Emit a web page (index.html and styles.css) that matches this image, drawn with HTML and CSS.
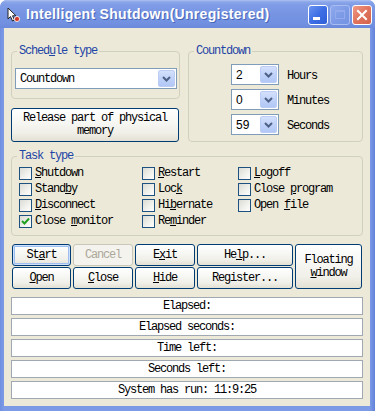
FILE: index.html
```html
<!DOCTYPE html>
<html>
<head>
<meta charset="utf-8">
<link rel="stylesheet" href="styles.css">
</head>
<body>
<div class="window">
  <div class="titlebar">
    <svg class="app-icon" width="16" height="16" viewBox="0 0 16 16">
      <path d="M3 1 L3 12 L5.5 9.5 L7.5 14 L9.5 13 L7.5 8.8 L11 8.8 Z" fill="#fff" stroke="#222" stroke-width="1"/>
      <circle cx="12" cy="12" r="2.6" fill="#d23a2a" stroke="#fff" stroke-width="0.8"/>
    </svg>
    <span class="title">Intelligent Shutdown(Unregistered)</span>
    <div class="tb-buttons">
      <span class="tb-btn tb-min"><span class="min-bar"></span></span>
      <span class="tb-btn tb-max"><span class="max-box"></span></span>
      <span class="tb-btn tb-close">
        <svg width="12" height="12" viewBox="0 0 12 12"><path d="M2 2 L10 10 M10 2 L2 10" stroke="#fff" stroke-width="2" stroke-linecap="square"/></svg>
      </span>
    </div>
  </div>
  <div class="body">
    <div class="top">
      <div class="left-col">
        <fieldset class="group sched">
          <legend>Sched<u>u</u>le type</legend>
          <div class="combo wide">
            <span class="combo-text">Countdown</span>
            <span class="combo-btn"><svg width="9" height="6" viewBox="0 0 9 6"><path d="M1 1 L4.5 4.5 L8 1" fill="none" stroke="#4d6185" stroke-width="2"/></svg></span>
          </div>
        </fieldset>
        <button class="btn release">Release part of physical<br>memory</button>
      </div>
      <fieldset class="group countdown">
        <legend>Countdown</legend>
        <div class="cd-rows">
          <div class="cd-row">
            <div class="combo small"><span class="combo-num">2</span><span class="combo-btn"><svg width="9" height="6" viewBox="0 0 9 6"><path d="M1 1 L4.5 4.5 L8 1" fill="none" stroke="#4d6185" stroke-width="2"/></svg></span></div>
            <span class="cd-label">Hours</span>
          </div>
          <div class="cd-row">
            <div class="combo small"><span class="combo-num">0</span><span class="combo-btn"><svg width="9" height="6" viewBox="0 0 9 6"><path d="M1 1 L4.5 4.5 L8 1" fill="none" stroke="#4d6185" stroke-width="2"/></svg></span></div>
            <span class="cd-label">Minutes</span>
          </div>
          <div class="cd-row">
            <div class="combo small"><span class="combo-num">59</span><span class="combo-btn"><svg width="9" height="6" viewBox="0 0 9 6"><path d="M1 1 L4.5 4.5 L8 1" fill="none" stroke="#4d6185" stroke-width="2"/></svg></span></div>
            <span class="cd-label">Seconds</span>
          </div>
        </div>
      </fieldset>
    </div>

    <fieldset class="group task">
      <legend>Task type</legend>
      <div class="task-grid">
        <label class="chk"><span class="box"></span><span><u>S</u>hutdown</span></label>
        <label class="chk"><span class="box"></span><span><u>R</u>estart</span></label>
        <label class="chk"><span class="box"></span><span><u>L</u>ogoff</span></label>
        <label class="chk"><span class="box"></span><span>Stand<u>b</u>y</span></label>
        <label class="chk"><span class="box"></span><span>Loc<u>k</u></span></label>
        <label class="chk"><span class="box"></span><span>Close <u>p</u>rogram</span></label>
        <label class="chk"><span class="box"></span><span><u>D</u>isconnect</span></label>
        <label class="chk"><span class="box"></span><span>Hi<u>b</u>ernate</span></label>
        <label class="chk"><span class="box"></span><span>Open <u>f</u>ile</span></label>
        <label class="chk"><span class="box checked"><svg width="11" height="11" viewBox="0 0 11 11"><path d="M2 5 L4.5 7.5 L9 2.5" fill="none" stroke="#21a121" stroke-width="2"/></svg></span><span>Close <u>m</u>onitor</span></label>
        <label class="chk"><span class="box"></span><span>Re<u>m</u>inder</span></label>
      </div>
    </fieldset>

    <div class="btn-grid">
      <button class="btn default">St<u>a</u>rt</button>
      <button class="btn disabled">Cancel</button>
      <button class="btn">E<u>x</u>it</button>
      <button class="btn">He<u>l</u>p...</button>
      <button class="btn floating">Floating<br><u>w</u>indow</button>
      <button class="btn"><u>O</u>pen</button>
      <button class="btn"><u>C</u>lose</button>
      <button class="btn"><u>H</u>ide</button>
      <button class="btn">Register...</button>
    </div>

    <div class="status">
      <div class="status-line">Elapsed:</div>
      <div class="status-line">Elapsed seconds:</div>
      <div class="status-line">Time left:</div>
      <div class="status-line">Seconds left:</div>
      <div class="status-line">System has run: 11:9:25</div>
    </div>
  </div>
</div>
</body>
</html>
```

FILE: styles.css
```css
html, body {
  margin: 0;
  padding: 0;
  background: #ffffff;
}

.window {
  width: 375px;
  height: 411px;
  box-sizing: border-box;
  display: flex;
  flex-direction: column;
  background: linear-gradient(to right, #6f8fe0 0, #7c9ae6 4px, #7c9ae6 calc(100% - 5px), #6282d8 100%);
  border-radius: 7px 7px 0 0;
  font-family: "Liberation Mono", "DejaVu Sans Mono", monospace;
  font-size: 12px;
  letter-spacing: -1.2px;
  color: #000;
  overflow: hidden;
}

/* ---------- title bar ---------- */
.titlebar {
  height: 28px;
  flex: none;
  display: flex;
  align-items: center;
  padding: 0 3px 0 5px;
  background: linear-gradient(to bottom, #aec2f2 0, #8aa6ea 2px, #7e9ce6 5px, #7694e2 50%, #7190e0 85%, #6a89dc 100%);
  border-radius: 7px 7px 0 0;
}

.app-icon {
  flex: none;
  margin-top: 1px;
}

.title {
  margin-left: 5px;
  font-family: "Liberation Sans", Arial, sans-serif;
  font-weight: bold;
  font-size: 14px;
  letter-spacing: 0.3px;
  color: #fff;
  text-shadow: 1px 1px 0 #4a66b8;
  white-space: nowrap;
  flex: 1;
}

.tb-buttons {
  display: flex;
  gap: 2px;
  margin-top: 1px;
}

.tb-btn {
  width: 20px;
  height: 20px;
  box-sizing: border-box;
  border: 1px solid #fff;
  border-radius: 3px;
  display: flex;
  align-items: center;
  justify-content: center;
  position: relative;
}

.tb-min {
  background: linear-gradient(135deg, #6b94f0 0, #3d6ee4 50%, #2f5fd8 100%);
}

.min-bar {
  position: absolute;
  left: 4px;
  bottom: 4px;
  width: 7px;
  height: 3px;
  background: #fff;
}

.tb-max {
  background: linear-gradient(135deg, #8eaaee 0, #7d9be6 50%, #7393e2 100%);
  border-color: #a9bdf0;
}

.max-box {
  width: 10px;
  height: 9px;
  box-sizing: border-box;
  border: 1px solid #93abec;
  border-top-width: 2px;
}

.tb-close {
  background: linear-gradient(135deg, #f09a86 0, #e0735d 50%, #d4624c 100%);
}

/* ---------- body ---------- */
.body {
  flex: 1;
  margin: 0 5px 5px 4px;
  background: #ece9d8;
  padding: 17px 7px 0 7px;
  display: flex;
  flex-direction: column;
}

.top {
  display: flex;
  gap: 8px;
}

.left-col {
  width: 169px;
  flex: none;
  display: flex;
  flex-direction: column;
}

.group {
  margin: 0;
  border: 1px solid #d0d0bf;
  border-radius: 4px;
  min-width: 0;
}

.group legend {
  padding: 0 2px;
  margin-left: 2px;
  line-height: 12px;
  color: #1f45a6;
}

.group legend u {
  text-decoration-thickness: 1px;
}

.sched {
  padding: 11px 2px 9px 3px;
}

.countdown {
  flex: 1;
  padding: 7px 3px 6px 3px;
}

.cd-rows {
  margin-left: 39px;
  display: flex;
  flex-direction: column;
  gap: 4px;
}

.cd-row {
  display: flex;
  align-items: center;
  gap: 8px;
}

.cd-label {
  padding-top: 3px;
}

/* ---------- combos ---------- */
.combo {
  height: 21px;
  box-sizing: border-box;
  border: 1px solid #7f9db9;
  background: #fff;
  display: flex;
  align-items: center;
  padding: 1px;
}

.combo.wide {
  width: 162px;
}

.combo.small {
  width: 48px;
}

.combo-text {
  flex: 1;
  padding-left: 3px;
  padding-top: 1px;
}

.combo-num {
  flex: 1;
  padding-left: 3px;
  font-family: "Liberation Sans", Arial, sans-serif;
  letter-spacing: 0;
  font-size: 12px;
}

.combo-btn {
  width: 17px;
  height: 17px;
  box-sizing: border-box;
  flex: none;
  border: 1px solid #bccdf5;
  border-radius: 2px;
  background: linear-gradient(to bottom, #d4e0fc 0, #c0d2f9 50%, #b2c7f6 100%);
  display: flex;
  align-items: center;
  justify-content: center;
}

/* ---------- buttons ---------- */
.btn {
  font: inherit;
  letter-spacing: inherit;
  color: #000;
  margin: 0;
  padding: 0;
  border: 1px solid #003c74;
  border-radius: 3px;
  background: linear-gradient(to bottom, #ffffff 0, #f7f7f4 40%, #f0efe8 75%, #e3e0d3 100%);
  line-height: 13px;
  text-align: center;
}

.release {
  margin-top: 9px;
  height: 34px;
  width: 168px;
}

.btn.default {
  box-shadow: inset 0 0 0 1px #cfe0fb, inset 0 0 0 2px #9ebdf0;
}

.btn.disabled {
  border-color: #c9c7ba;
  color: #aca899;
  background: #f4f3ee;
}

.btn-grid {
  margin-top: 8px;
  padding-left: 1px;
  display: grid;
  grid-template-columns: 59px 60px 60px 96px 67px;
  grid-template-rows: 22px 22px;
  column-gap: 2px;
  row-gap: 1px;
}

.btn.floating {
  grid-column: 5;
  grid-row: 1 / span 2;
}

/* ---------- task type ---------- */
.task {
  margin-top: 8px;
  padding: 3px 3px 6px 3px;
}

.task-grid {
  padding-left: 4px;
  display: grid;
  grid-template-columns: 123px 96px 1fr;
  grid-auto-rows: 16px;
}

.chk {
  display: flex;
  align-items: center;
  gap: 3px;
  white-space: nowrap;
}

.box {
  width: 13px;
  height: 13px;
  box-sizing: border-box;
  flex: none;
  border: 1px solid #1c5180;
  background: linear-gradient(135deg, #dcdcd5 0, #eeeeea 50%, #ffffff 100%);
  display: flex;
  align-items: center;
  justify-content: center;
}

/* ---------- status ---------- */
.status {
  margin-top: 8px;
  display: flex;
  flex-direction: column;
  gap: 3px;
}

.status-line {
  height: 18px;
  box-sizing: border-box;
  border: 1px solid #a0a8b2;
  background: #fff;
  text-align: center;
  line-height: 16px;
}
```
